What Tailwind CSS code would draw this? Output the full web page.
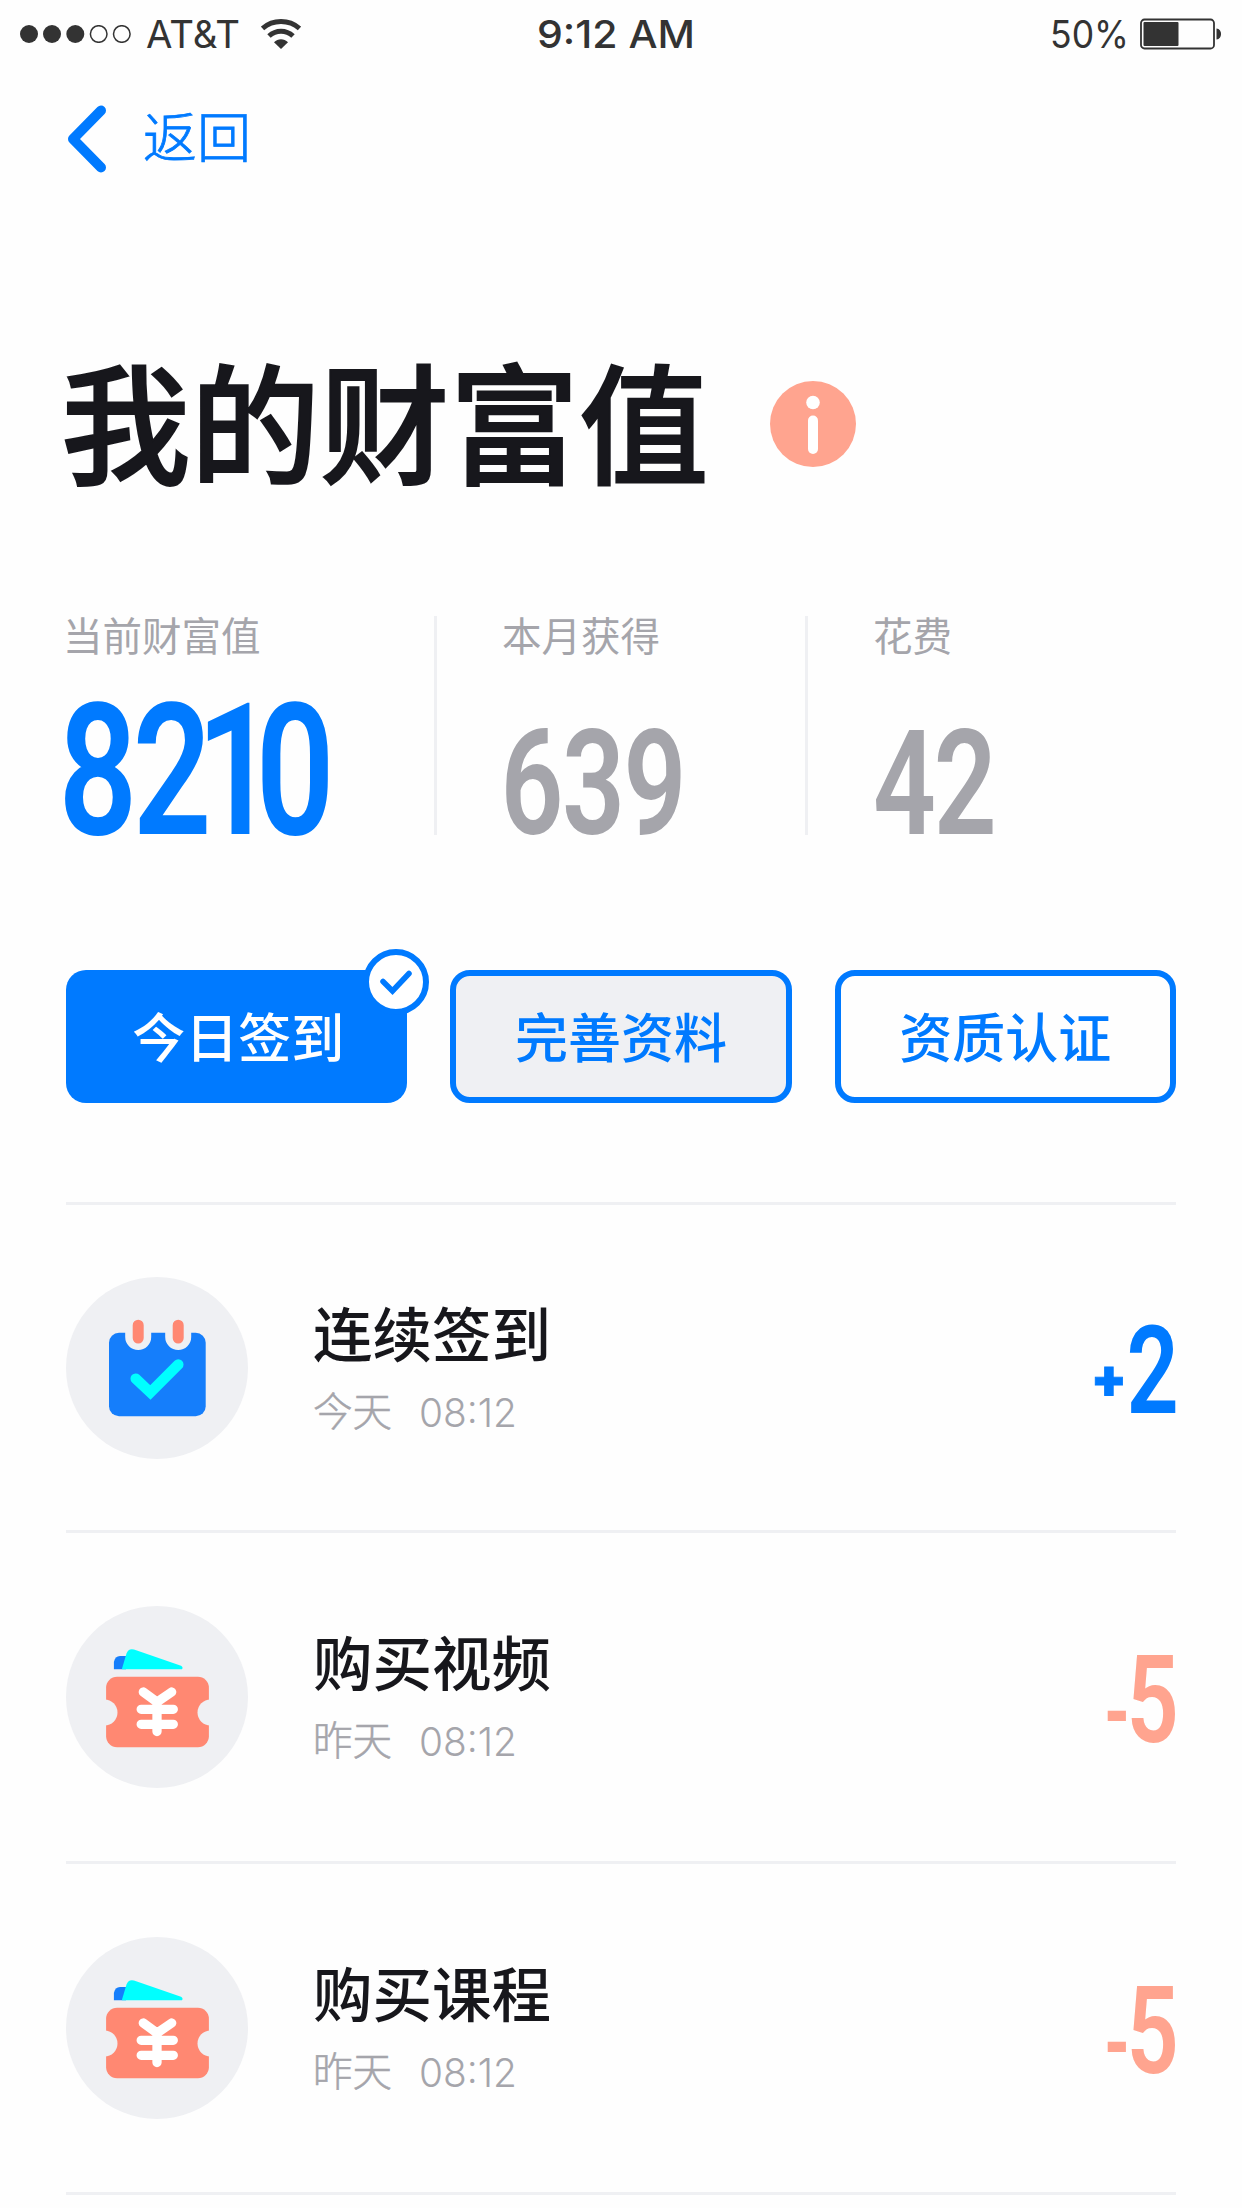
<!DOCTYPE html>
<html lang="zh-CN">
<head>
<meta charset="utf-8">
<title>我的财富值</title>
<script src="https://cdn.jsdelivr.net/npm/@tailwindcss/browser@4"></script>
</head>
<body class="bg-[#fefefe]">
<main class="flex h-[2208px] w-[1242px] flex-col overflow-hidden bg-[#fefefe] font-['Inter','Noto_Sans_CJK_SC',sans-serif] text-[#17171c]">

  <!-- Status bar -->
  <header class="grid h-[67px] shrink-0 grid-cols-3 items-center pl-5 pr-5 text-[#333]">
    <div class="flex items-center">
      <svg class="h-[18px] w-[112px]" viewBox="0 0 112 18" fill="#333">
        <circle cx="9" cy="9" r="9"/><circle cx="32" cy="9" r="9"/><circle cx="55.300" cy="9" r="9"/>
        <g fill="none" stroke="#333" stroke-width="1.500"><circle cx="78.700" cy="9" r="8.300"/><circle cx="101.800" cy="9" r="8.300"/></g>
      </svg>
      <svg class="ml-[14px] h-[48px] w-[95px] overflow-visible" viewBox="0 0 95 48"><text x="0" y="38" textLength="94" lengthAdjust="spacingAndGlyphs" font-size="38.500" fill="#333">AT&amp;T</text></svg>
      <svg class="ml-5 h-[30px] w-[40px]" viewBox="0 0 40 30" fill="none" stroke="#333" stroke-width="5">
        <path d="M1.500 9.500C12 .2 28 .2 38.500 9.500"/><path d="M8 17C15 10.500 25 10.500 32 17"/><path d="M13 23.200C17 19.200 23 19.200 27 23.200L20 30Z" fill="#333" stroke="none"/>
      </svg>
    </div>
    <div class="flex justify-center pr-[9px]">
      <svg class="h-[48px] w-[158px] overflow-visible" viewBox="0 0 158 48"><text x="0" y="38" textLength="158" lengthAdjust="spacingAndGlyphs" font-size="38.500" font-weight="500" fill="#333">9:12 AM</text></svg>
    </div>
    <div class="flex items-center justify-end">
      <svg class="h-[48px] w-[80px] overflow-visible" viewBox="0 0 80 48"><text x="0" y="38" textLength="79" lengthAdjust="spacingAndGlyphs" font-size="38.500" fill="#333">50%</text></svg>
      <svg class="ml-[10px] h-[32px] w-[82px]" viewBox="0 0 82 32" fill="#333">
        <rect x="1" y="1.500" width="73" height="29" rx="3.500" fill="none" stroke="#333" stroke-width="1.800"/>
        <rect x="3.500" y="4" width="35" height="24" rx="1"/><path d="M76.500 10.500C82.500 11 82.500 21 76.500 21.500Z"/>
      </svg>
    </div>
  </header>

  <nav class="flex h-[143px] shrink-0 items-center pl-[66px] text-[#007aff]">
    <svg class="h-[68px] w-[42px]" viewBox="0 0 42 68" fill="none" stroke="#007aff" stroke-width="10" stroke-linecap="round" stroke-linejoin="round"><path d="M35 5.500L7 34L35 62.500"/></svg>
    <a class="ml-[35px] mt-px text-[54px] leading-[60px] font-light [-webkit-text-stroke:0.8px]">返回</a>
  </nav>

  <section class="flex h-[406px] shrink-0 items-start pl-[61px] pt-[137px]">
    <h1 class="w-[650px] text-[129.500px] leading-[160px] font-medium [-webkit-text-stroke:1.8px]">我的财富值</h1>
    <svg class="ml-[59px] mt-[34px] size-[86px]" viewBox="0 0 86 86"><circle cx="43" cy="43" r="43" fill="#ffa48f"/><circle cx="43" cy="21.500" r="6.800" fill="#fff"/><path d="M43 39.500V68" stroke="#fff" stroke-width="10" stroke-linecap="round"/></svg>
  </section>

  <!-- Totals -->
  <section class="flex h-[219px] shrink-0 pl-[63px] text-[39.500px] leading-[36px] text-[#a5a5ab] font-['Noto_Sans_CJK_SC',sans-serif]">
    <div class="flex w-[374px] flex-col justify-between border-r-3 border-[#eff0f3]">
      <p>当前财富值</p>
      <svg class="h-[140px] w-[280px] overflow-visible" viewBox="0 0 280 140"><text transform="translate(0 139) scale(.75 1)" x="-6 93 178 257" font-family="Roboto" font-size="184" font-weight="600" fill="#007aff">8210</text></svg>
    </div>
    <div class="flex w-[371px] flex-col justify-between border-r-3 border-[#eff0f3] pl-[65px]">
      <p>本月获得</p>
      <svg class="h-[110px] w-[190px] overflow-visible" viewBox="0 0 190 110"><text transform="translate(3 109) scale(.75 1)" x="-6 76 158" font-family="Roboto" font-size="147" font-weight="600" fill="#a5a5ab">639</text></svg>
    </div>
    <div class="flex flex-col justify-between pl-[65px]">
      <p>花费</p>
      <svg class="h-[110px] w-[130px] overflow-visible" viewBox="0 0 130 110"><text transform="translate(3 109) scale(.75 1)" x="-4 77" font-family="Roboto" font-size="147" font-weight="600" fill="#a5a5ab">42</text></svg>
    </div>
  </section>

  <section class="mt-[135px] grid h-[133px] shrink-0 grid-cols-3 gap-[43px] px-[66px] text-[53px] font-medium leading-none text-[#007aff]">
    <button class="relative rounded-[20px] bg-[#007aff] pt-[6px] pl-[3px] text-white">今日签到
      <svg class="absolute -right-[22px] -top-[21px] size-[66px]" viewBox="0 0 66 66" fill="none" stroke="#007aff" stroke-width="6"><circle cx="33" cy="33" r="30" fill="#fff"/><path d="M20 32.500L29.500 42L46 24.500" stroke-width="5.500" stroke-linecap="round"/></svg>
    </button>
    <button class="rounded-[20px] border-6 border-[#007aff] bg-[#eff0f3] pt-[6px]">完善资料</button>
    <button class="rounded-[20px] border-6 border-[#007aff] pt-[6px]">资质认证</button>
  </section>

  <!-- History -->
  <ul class="mx-[66px] mt-[99px] flex flex-col">
    <li class="flex h-[328px] shrink-0 items-start border-t-3 border-[#eff0f3] pt-[72px]">
      <svg class="size-[182px]" viewBox="0 0 182 182" fill="none">
        <circle cx="91" cy="91" r="91" fill="#eff0f3"/>
        <rect x="43" y="55.700" width="96.700" height="83.500" rx="10" fill="#157efb"/>
        <path d="M72.200 48V60M112.200 48V60" stroke="#eff0f3" stroke-width="26" stroke-linecap="round"/>
        <path d="M72.200 48.200V61M112.200 48.200V61" stroke="#ff8872" stroke-width="11" stroke-linecap="round"/>
        <path d="M69.700 101.700L84.400 115.500L112.300 87.500" stroke="#0ff" stroke-width="10.500" stroke-linecap="round"/>
      </svg>
      <div class="ml-[65px] flex flex-col">
        <h2 class="mt-[23px] text-[59.500px] leading-[70px] font-medium">连续签到</h2>
        <p class="mt-[17px] flex items-center text-[39.500px] leading-[50px] font-light text-[#a5a5ab] [-webkit-text-stroke:0.5px]">今天<svg class="ml-[27px] h-10 w-[100px] overflow-visible" viewBox="0 0 100 40"><text x="0" y="35" textLength="98" lengthAdjust="spacingAndGlyphs" font-size="40" fill="#a5a5ab">08:12</text></svg></p>
      </div>
      <svg class="ml-auto mt-[46px] h-[92px] w-[90px] overflow-visible" viewBox="0 0 90 92" font-family="Roboto" fill="#007aff"><text transform="translate(8 77)" font-size="56" font-weight="900" stroke="#007aff" stroke-width=".8">+</text><text transform="translate(40.500 90) scale(.75 1)" font-size="122" font-weight="600">2</text></svg>
    </li>
    <li class="flex h-[331px] shrink-0 items-start border-t-3 border-[#eff0f3] pt-[73px]">
      <svg class="size-[182px]" viewBox="0 0 182 182" fill="none">
        <circle cx="91" cy="91" r="91" fill="#eff0f3"/>
        <path d="M47.900 63.300V56Q49 50 54 50H60V63.300Z" fill="#157efb"/>
        <path d="M55.800 63.300L60.500 47.500Q62.500 42 68 43.500L115 59.800Q117.500 61.500 116 63.300Z" fill="#0ff"/>
        <rect x="40.100" y="70.700" width="102.800" height="70.500" rx="11" fill="#ff8872"/>
        <circle cx="38.500" cy="106.500" r="13" fill="#eff0f3"/><circle cx="144.500" cy="106.500" r="13" fill="#eff0f3"/>
        <path d="M77.300 86L91 96L105.700 86M91 96V125.500M75.200 103.300H107.300M75.200 118.300H107.300" stroke="#fff" stroke-width="9.300" stroke-linecap="round"/>
      </svg>
      <div class="ml-[65px] flex flex-col">
        <h2 class="mt-[23px] text-[59.500px] leading-[70px] font-medium">购买视频</h2>
        <p class="mt-[17px] flex items-center text-[39.500px] leading-[50px] font-light text-[#a5a5ab] [-webkit-text-stroke:0.5px]">昨天<svg class="ml-[27px] h-10 w-[100px] overflow-visible" viewBox="0 0 100 40"><text x="0" y="35" textLength="98" lengthAdjust="spacingAndGlyphs" font-size="40" fill="#a5a5ab">08:12</text></svg></p>
      </div>
      <svg class="ml-auto mt-[46px] h-[92px] w-[90px] overflow-visible" viewBox="0 0 90 92" font-family="Roboto" fill="#ffa48f"><text transform="translate(18.500 94) scale(.68 1)" font-size="100" font-weight="600">-</text><text transform="translate(40.500 90) scale(.75 1)" font-size="122" font-weight="600">5</text></svg>
    </li>
    <li class="flex h-[331px] shrink-0 items-start border-t-3 border-[#eff0f3] pt-[73px]">
      <svg class="size-[182px]" viewBox="0 0 182 182" fill="none">
        <circle cx="91" cy="91" r="91" fill="#eff0f3"/>
        <path d="M47.900 63.300V56Q49 50 54 50H60V63.300Z" fill="#157efb"/>
        <path d="M55.800 63.300L60.500 47.500Q62.500 42 68 43.500L115 59.800Q117.500 61.500 116 63.300Z" fill="#0ff"/>
        <rect x="40.100" y="70.700" width="102.800" height="70.500" rx="11" fill="#ff8872"/>
        <circle cx="38.500" cy="106.500" r="13" fill="#eff0f3"/><circle cx="144.500" cy="106.500" r="13" fill="#eff0f3"/>
        <path d="M77.300 86L91 96L105.700 86M91 96V125.500M75.200 103.300H107.300M75.200 118.300H107.300" stroke="#fff" stroke-width="9.300" stroke-linecap="round"/>
      </svg>
      <div class="ml-[65px] flex flex-col">
        <h2 class="mt-[23px] text-[59.500px] leading-[70px] font-medium">购买课程</h2>
        <p class="mt-[17px] flex items-center text-[39.500px] leading-[50px] font-light text-[#a5a5ab] [-webkit-text-stroke:0.5px]">昨天<svg class="ml-[27px] h-10 w-[100px] overflow-visible" viewBox="0 0 100 40"><text x="0" y="35" textLength="98" lengthAdjust="spacingAndGlyphs" font-size="40" fill="#a5a5ab">08:12</text></svg></p>
      </div>
      <svg class="ml-auto mt-[46px] h-[92px] w-[90px] overflow-visible" viewBox="0 0 90 92" font-family="Roboto" fill="#ffa48f"><text transform="translate(18.500 94) scale(.68 1)" font-size="100" font-weight="600">-</text><text transform="translate(40.500 90) scale(.75 1)" font-size="122" font-weight="600">5</text></svg>
    </li>
    <li class="h-[14px] border-t-3 border-[#eff0f3]"></li>
  </ul>
</main>
</body>
</html>
